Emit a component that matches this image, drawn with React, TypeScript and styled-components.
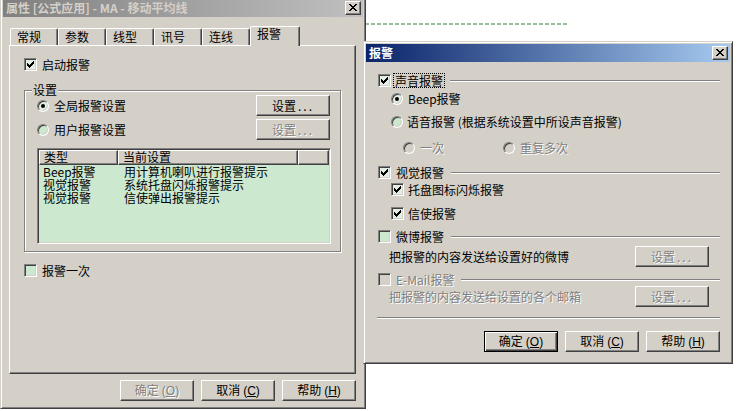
import React from 'react';
import styled, { createGlobalStyle } from 'styled-components';

const FACE = '#D4D0C8';
const SHADOW = '#808080';
const DARK = '#404040';
const GREEN = '#CCE8CF';

const GlobalStyle = createGlobalStyle`
  html, body { margin: 0; padding: 0; background: #fff; }
  body { font-family: "Noto Sans CJK SC", "Liberation Sans", sans-serif; font-size: 12px; }
  * { box-sizing: border-box; }
`;

const Desktop = styled.div`
  position: relative;
  width: 742px;
  height: 411px;
  overflow: hidden;
  background: #fff;
  font-family: "Noto Sans CJK SC", "Liberation Sans", sans-serif;
  font-size: 12px;
  line-height: 14px;
  color: #000;
`;

const ChartLine = styled.svg`
  position: absolute;
  left: 365px;
  top: 23px;
`;

const Window = styled.div<{ $x: number; $y: number; $w: number; $h: number }>`
  position: absolute;
  left: ${(p) => p.$x}px;
  top: ${(p) => p.$y}px;
  width: ${(p) => p.$w}px;
  height: ${(p) => p.$h}px;
  background: ${FACE};
  border: 1px solid;
  border-color: ${FACE} ${DARK} ${DARK} ${FACE};
  box-shadow: inset 1px 1px #fff, inset -1px -1px ${SHADOW};
  padding: 2px;
  display: flex;
  flex-direction: column;
`;

const TitleBar = styled.div<{ $active?: boolean }>`
  flex: none;
  height: 18px;
  display: flex;
  align-items: center;
  justify-content: space-between;
  padding: 0 2px 0 3px;
  background: ${(p) =>
    p.$active
      ? 'linear-gradient(to right, #0A246A, #A6CAF0)'
      : 'linear-gradient(to right, #808080, #C0C0C0)'};
  color: ${(p) => (p.$active ? '#fff' : FACE)};
  font-weight: bold;
  white-space: nowrap;
`;

const TitleText = styled.span`
  line-height: 14px;
`;

const CloseBtn = styled.div`
  width: 16px;
  height: 14px;
  flex: none;
  background: ${FACE};
  border: 1px solid;
  border-color: #fff ${DARK} ${DARK} #fff;
  box-shadow: inset -1px -1px ${SHADOW};
  display: flex;
  align-items: center;
  justify-content: center;
  padding-bottom: 1px;
`;

const XGlyph = () => (
  <svg width="8" height="7" viewBox="0 0 8 7" shapeRendering="crispEdges">
    <path
      d="M0 0h2v1h-2z M6 0h2v1h-2z M1 1h2v1h-2z M5 1h2v1h-2z M2 2h4v1h-4z M3 3h2v1h-2z M2 4h4v1h-4z M1 5h2v1h-2z M5 5h2v1h-2z M0 6h2v1h-2z M6 6h2v1h-2z"
      fill="#000"
    />
  </svg>
);

/* ---------- tabs ---------- */

const TabStrip = styled.div`
  flex: none;
  display: flex;
  align-items: flex-end;
  height: 19px;
  margin: 9px 0 0 6px;
  padding-left: 1px;
  position: relative;
  z-index: 1;
`;

const Tab = styled.div<{ $sel?: boolean }>`
  width: ${(p) => (p.$sel ? 50 : 48)}px;
  height: ${(p) => (p.$sel ? 20 : 17)}px;
  margin-bottom: ${(p) => (p.$sel ? -1 : 0)}px;
  background: ${FACE};
  border-top: 1px solid #fff;
  border-left: 1px solid #fff;
  border-right: 1px solid ${DARK};
  border-top-left-radius: 2px;
  border-top-right-radius: 2px;
  box-shadow: inset -1px 0 ${SHADOW};
  padding: ${(p) => (p.$sel ? '1px 0 0 6px' : '2px 0 0 6px')};
  line-height: 12px;
`;

const TabPanel = styled.div`
  flex: none;
  margin-left: 6px;
  width: 347px;
  height: 329px;
  border: 1px solid;
  border-color: #fff ${DARK} ${DARK} #fff;
  box-shadow: inset -1px -1px ${SHADOW};
  padding: 12px 14px 0 14px;
  display: flex;
  flex-direction: column;
`;

/* ---------- controls ---------- */

const Row = styled.div<{ $mt?: number; $indent?: number; $h?: number }>`
  display: flex;
  align-items: center;
  height: ${(p) => p.$h ?? 13}px;
  margin-top: ${(p) => p.$mt ?? 0}px;
  margin-left: ${(p) => p.$indent ?? 0}px;
  white-space: nowrap;
`;

const Label = styled.span<{ $disabled?: boolean; $focus?: boolean; $gap?: number }>`
  margin-left: ${(p) => p.$gap ?? 4}px;
  color: ${(p) => (p.$disabled ? SHADOW : '#000')};
  text-shadow: ${(p) => (p.$disabled ? '1px 1px #fff' : 'none')};
  outline: ${(p) => (p.$focus ? '1px dotted #000' : 'none')};
  outline-offset: 0;
  line-height: 13px;
  padding: 0 1px;
`;

const Box = styled.span<{ $disabled?: boolean; $checked?: boolean }>`
  flex: none;
  width: 13px;
  height: 13px;
  border: 1px solid;
  border-color: ${SHADOW} #fff #fff ${SHADOW};
  box-shadow: inset 1px 1px ${DARK}, inset -1px -1px ${FACE};
  background: ${(p) => (p.$disabled ? FACE : p.$checked ? '#E4EEE4' : GREEN)};
  display: flex;
  align-items: center;
  justify-content: center;
`;

const CheckBox = ({ checked, disabled }: { checked?: boolean; disabled?: boolean }) => (
  <Box $checked={checked} $disabled={disabled}>
    {checked && (
      <svg width="7" height="7" viewBox="0 0 7 7" shapeRendering="crispEdges">
        <path
          d="M6 0h1v3h-1z M5 1h1v3h-1z M4 2h1v3h-1z M3 3h1v3h-1z M2 4h1v3h-1z M1 3h1v3h-1z M0 2h1v3h-1z"
          fill={disabled ? SHADOW : '#000'}
        />
      </svg>
    )}
  </Box>
);

const RadioCircle = styled.span<{ $on?: boolean; $disabled?: boolean }>`
  flex: none;
  position: relative;
  width: 12px;
  height: 12px;
  border-radius: 50%;
  border: 1px solid;
  border-color: ${SHADOW} #fff #fff ${SHADOW};
  box-shadow: inset 1px 1px ${DARK}, inset -1px -1px ${FACE};
  background: ${(p) => (p.$disabled ? FACE : p.$on ? '#E4EEE4' : GREEN)};
  &::after {
    content: '';
    display: ${(p) => (p.$on ? 'block' : 'none')};
    position: absolute;
    left: 3px;
    top: 3px;
    width: 4px;
    height: 4px;
    border-radius: 50%;
    background: #000;
  }
`;

const Button = styled.button<{ $default?: boolean }>`
  flex: none;
  width: 74px;
  height: 21px;
  padding: 0;
  font: inherit;
  line-height: 13px;
  background: ${FACE};
  color: #000;
  border: 1px solid;
  border-color: ${(p) => (p.$default ? '#000' : `#fff ${DARK} ${DARK} #fff`)};
  box-shadow: ${(p) =>
    p.$default
      ? `inset 1px 1px #fff, inset -1px -1px ${DARK}, inset -2px -2px ${SHADOW}`
      : `inset -1px -1px ${SHADOW}`};
  &:disabled {
    color: ${SHADOW};
    text-shadow: 1px 1px #fff;
  }
`;

const Dots = styled.span`
  letter-spacing: 2px;
  margin-left: 2px;
`;

const Paren = styled.span`
  margin-left: 3px;
  font-family: "Liberation Sans", sans-serif;
  & u {
    text-underline-offset: 1px;
  }
`;

const SetupLabel = () => (
  <>
    设置<Dots>...</Dots>
  </>
);

const Mnemonic = ({ text, k }: { text: string; k: string }) => (
  <>
    {text}
    <Paren>
      (<u>{k}</u>)
    </Paren>
  </>
);

const ButtonRow = styled.div<{ $mt: number; $pr: number }>`
  display: flex;
  justify-content: flex-end;
  gap: 7px;
  margin-top: ${(p) => p.$mt}px;
  padding-right: ${(p) => p.$pr}px;
`;

/* ---------- group box ---------- */

const GroupBox = styled.div`
  position: relative;
  margin-top: 19px;
  border: 1px solid ${SHADOW};
  box-shadow: inset 1px 1px #fff, 1px 1px #fff;
  padding: 4px 10px 7px 12px;
  display: flex;
  flex-direction: column;
`;

const Legend = styled.span`
  position: absolute;
  left: 7px;
  top: -8px;
  padding: 0 1px;
  background: ${FACE};
  line-height: 14px;
`;

const OptionRow = styled.div<{ $mt?: number }>`
  display: flex;
  align-items: center;
  justify-content: space-between;
  height: 21px;
  margin-top: ${(p) => p.$mt ?? 0}px;
`;

const OptionLeft = styled.div`
  display: flex;
  align-items: center;
`;

/* ---------- list view ---------- */

const ListView = styled.div`
  margin-top: 8px;
  margin-right: -1px;
  height: 96px;
  border: 1px solid;
  border-color: ${SHADOW} #fff #fff ${SHADOW};
  box-shadow: inset 1px 1px ${DARK}, inset -1px -1px ${FACE};
  padding: 1px;
  background: ${GREEN};
  display: flex;
  flex-direction: column;
`;

const ListGrid = styled.div<{ $h: number }>`
  display: grid;
  grid-template-columns: 79px 180px 1fr;
  height: ${(p) => p.$h}px;
  line-height: ${(p) => p.$h}px;
`;

const HeaderCell = styled.div`
  background: ${FACE};
  border: 1px solid;
  border-color: #fff ${DARK} ${DARK} #fff;
  box-shadow: inset -1px -1px ${SHADOW};
  padding-left: 4px;
  line-height: 12px;
  white-space: nowrap;
`;

const Cell = styled.div<{ $pl: number }>`
  padding-left: ${(p) => p.$pl}px;
  white-space: nowrap;
`;

/* ---------- right dialog parts ---------- */

const Body = styled.div<{ $pt: number; $pl: number; $pr: number }>`
  display: flex;
  flex-direction: column;
  padding: ${(p) => p.$pt}px ${(p) => p.$pr}px 0 ${(p) => p.$pl}px;
`;

const EtchLine = styled.span<{ $ml?: number }>`
  flex: 1;
  height: 2px;
  margin-left: ${(p) => p.$ml ?? 6}px;
  border-top: 1px solid ${SHADOW};
  border-bottom: 1px solid #fff;
`;

const Separator = styled.div<{ $mt: number }>`
  height: 2px;
  margin-top: ${(p) => p.$mt}px;
  margin-left: -1px;
  border-top: 1px solid ${SHADOW};
  border-bottom: 1px solid #fff;
`;

const DescRow = styled.div<{ $mt: number }>`
  display: flex;
  align-items: center;
  justify-content: space-between;
  height: 21px;
  margin-top: ${(p) => p.$mt}px;
  padding: 0 11px 0 11px;
`;

const DescText = styled.span<{ $disabled?: boolean }>`
  color: ${(p) => (p.$disabled ? SHADOW : '#000')};
  text-shadow: ${(p) => (p.$disabled ? '1px 1px #fff' : 'none')};
  line-height: 14px;
`;

const RadioItem = styled.div<{ $w?: number }>`
  display: flex;
  align-items: center;
  width: ${(p) => (p.$w ? `${p.$w}px` : 'auto')};
`;

const listRows = [
  ['Beep报警', '用计算机喇叭进行报警提示'],
  ['视觉报警', '系统托盘闪烁报警提示'],
  ['视觉报警', '信使弹出报警提示'],
];

const PropertiesDialog = () => (
  <Window $x={0} $y={-4} $w={366} $h={413}>
    <TitleBar>
      <TitleText>属性 [公式应用] - MA - 移动平均线</TitleText>
      <CloseBtn>
        <XGlyph />
      </CloseBtn>
    </TitleBar>
    <TabStrip>
      <Tab>常规</Tab>
      <Tab>参数</Tab>
      <Tab>线型</Tab>
      <Tab>讯号</Tab>
      <Tab>连线</Tab>
      <Tab $sel>报警</Tab>
    </TabStrip>
    <TabPanel>
      <Row>
        <CheckBox checked />
        <Label $gap={4}>启动报警</Label>
      </Row>
      <GroupBox>
        <Legend>设置</Legend>
        <OptionRow>
          <OptionLeft>
            <RadioCircle $on />
            <Label>全局报警设置</Label>
          </OptionLeft>
          <Button>
            <SetupLabel />
          </Button>
        </OptionRow>
        <OptionRow $mt={3}>
          <OptionLeft>
            <RadioCircle />
            <Label>用户报警设置</Label>
          </OptionLeft>
          <Button disabled>
            <SetupLabel />
          </Button>
        </OptionRow>
        <ListView>
          <ListGrid $h={15}>
            <HeaderCell>类型</HeaderCell>
            <HeaderCell>当前设置</HeaderCell>
            <HeaderCell />
          </ListGrid>
          {listRows.map(([a, b], i) => (
            <ListGrid $h={13} key={i}>
              <Cell $pl={4}>{a}</Cell>
              <Cell $pl={6}>{b}</Cell>
              <Cell $pl={0} />
            </ListGrid>
          ))}
        </ListView>
      </GroupBox>
      <Row $mt={12}>
        <CheckBox />
        <Label $gap={4}>报警一次</Label>
      </Row>
    </TabPanel>
    <ButtonRow $mt={6} $pr={7}>
      <Button disabled>
        <Mnemonic text="确定" k="O" />
      </Button>
      <Button>
        <Mnemonic text="取消" k="C" />
      </Button>
      <Button>
        <Mnemonic text="帮助" k="H" />
      </Button>
    </ButtonRow>
  </Window>
);

const AlarmDialog = () => (
  <Window $x={363} $y={41} $w={370} $h={323}>
    <TitleBar $active>
      <TitleText>报警</TitleText>
      <CloseBtn>
        <XGlyph />
      </CloseBtn>
    </TitleBar>
    <Body $pt={12} $pl={12} $pr={10}>
      <Row>
        <CheckBox checked />
        <Label $focus $gap={3}>声音报警</Label>
        <EtchLine />
      </Row>
      <Row $mt={5} $indent={13}>
        <RadioCircle $on />
        <Label $gap={4}>Beep报警</Label>
      </Row>
      <Row $mt={10} $indent={13}>
        <RadioCircle />
        <Label $gap={3}>语音报警 (根据系统设置中所设声音报警)</Label>
      </Row>
      <Row $mt={13} $indent={25}>
        <RadioItem $w={100}>
          <RadioCircle $disabled />
          <Label $disabled $gap={4}>一次</Label>
        </RadioItem>
        <RadioItem>
          <RadioCircle $disabled />
          <Label $disabled $gap={4}>重复多次</Label>
        </RadioItem>
      </Row>
      <Row $mt={12}>
        <CheckBox checked />
        <Label $gap={4}>视觉报警</Label>
        <EtchLine />
      </Row>
      <Row $mt={4} $indent={13}>
        <CheckBox checked />
        <Label $gap={3}>托盘图标闪烁报警</Label>
      </Row>
      <Row $mt={11} $indent={13}>
        <CheckBox checked />
        <Label $gap={3}>信使报警</Label>
      </Row>
      <Row $mt={10}>
        <CheckBox />
        <Label $gap={4}>微博报警</Label>
        <EtchLine />
      </Row>
      <DescRow $mt={3}>
        <DescText>把报警的内容发送给设置好的微博</DescText>
        <Button disabled>
          <SetupLabel />
        </Button>
      </DescRow>
      <Row $mt={6}>
        <CheckBox disabled />
        <Label $disabled $gap={4}>E-Mail报警</Label>
        <EtchLine $ml={6} />
      </Row>
      <DescRow $mt={0}>
        <DescText $disabled>把报警的内容发送给设置的各个邮箱</DescText>
        <Button disabled>
          <SetupLabel />
        </Button>
      </DescRow>
      <Separator $mt={10} />
      <ButtonRow $mt={12} $pr={0}>
        <Button $default>
          <Mnemonic text="确定" k="O" />
        </Button>
        <Button>
          <Mnemonic text="取消" k="C" />
        </Button>
        <Button>
          <Mnemonic text="帮助" k="H" />
        </Button>
      </ButtonRow>
    </Body>
  </Window>
);

export default function App() {
  return (
    <>
      <GlobalStyle />
      <Desktop>
        <ChartLine width="202" height="2" viewBox="0 0 202 2">
          <line x1="0" y1="1" x2="202" y2="1" stroke="#2E7D32" strokeWidth="1" strokeDasharray="4 2" />
        </ChartLine>
        <PropertiesDialog />
        <AlarmDialog />
      </Desktop>
    </>
  );
}
